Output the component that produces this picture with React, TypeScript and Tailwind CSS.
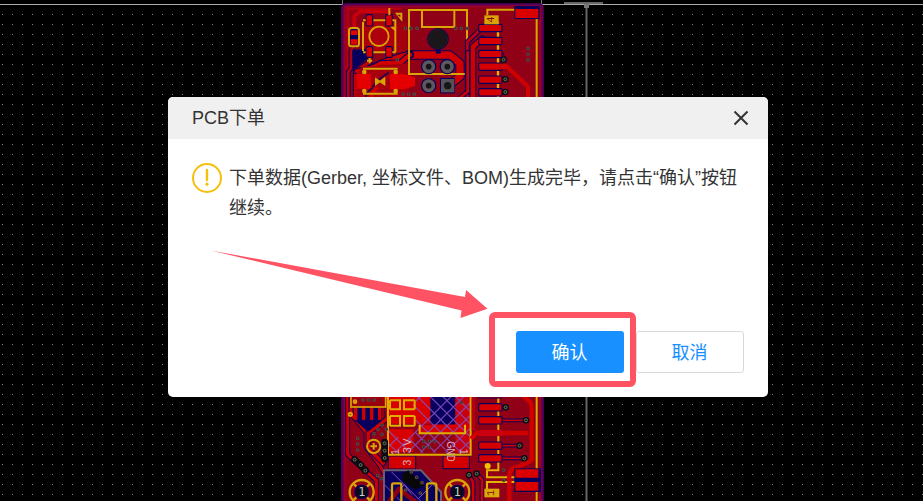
import React from "react";

const NAVY = "#08005c";
const RED = "#d00000";
const COPPER = "#900016";
const GOLD = "#d8a406";

type TraceProps = { d: string; w?: number; color?: string; edge?: number };

function Trace({ d, w = 10, color = RED, edge = 3 }: TraceProps) {
  return (
    <g fill="none" strokeLinejoin="round" strokeLinecap="round">
      <path d={d} stroke={NAVY} strokeWidth={w + edge * 2} />
      <path d={d} stroke={color} strokeWidth={w} />
    </g>
  );
}

function Pad({ x, y, w, h }: { x: number; y: number; w: number; h: number }) {
  return <rect x={x} y={y} width={w} height={h} rx="4" fill="#d60000" stroke={NAVY} strokeWidth="3.5" />;
}

function Via({ x, y, r = 8 }: { x: number; y: number; r?: number }) {
  return (
    <g>
      <circle cx={x} cy={y} r={r + 2} fill="#0c0c10" />
      <circle cx={x} cy={y} r={r * 0.55} fill="#161616" stroke="#667064" strokeWidth="3" />
    </g>
  );
}

function Dots({ points }: { points: number[][] }) {
  return (
    <g fill="#222" stroke="#5c4a48" strokeWidth="3.2">
      {points.map(([x, y]) => (
        <circle key={`${x}-${y}`} cx={x} cy={y} r="4" />
      ))}
    </g>
  );
}

function BoardTop() {
  return (
    <g transform="translate(335 0) scale(0.33333)">
      <path d="M22 320V24Q22 13 34 13H612Q623 13 623 24V320Z" fill={COPPER} stroke="#56005f" strokeWidth="7" />
      <path d="M29 320V27Q29 20 37 20H606Q615 20 615 28V320" fill="none" stroke="#98002e" strokeWidth="5" />
      <path d="M38 300V32Q38 26 46 26H200" fill="none" stroke="#b40010" strokeWidth="7" />
      <path d="M180 70H215V160L180 172Z" fill="#a4000e" />
      <rect x="86" y="62" width="94" height="95" fill="#ae000c" />
      <path d="M58 84V48L76 34H162V48" fill="none" stroke="#cc000c" strokeWidth="11" strokeLinejoin="round" />
      <Trace d="M57 126V140L48 150V205L40 215V300" w={8} color="#b80010" />
      <path d="M52 150L92 147L100 174L70 198L54 210Z" fill={NAVY} />
      <Trace d="M105 165V185L62 214V290" w={11} color="#bb0008" />
      <Trace d="M165 173H198L215 165" w={8} color="#9e0010" />
      <Trace d="M215 243H186" w={26} />
      <Trace d="M220 165H345L375 190V230L344 254" w={22} />
      <Trace d="M110 205Q170 175 225 164" w={18} />
      <Trace d="M66 214Q125 202 136 190L198 187Q214 172 225 164" w={13} />
      <path d="M80 200L190 192H222V296H64V222Z" fill="#a6000e" />
      <path d="M128 262Q108 278 106 300" fill="none" stroke={RED} strokeWidth="10" />
      <path d="M64 222H108V266H66ZM165 222H206L240 232V258L206 268H165Z" fill="#e40000" />
      <path d="M112 264Q92 277 90 300M161 218Q128 238 112 262" fill="none" stroke={NAVY} strokeWidth="4" />
      <Pad x={93} y={44} w={20} h={34} />
      <Pad x={152} y={44} w={20} h={34} />
      <Pad x={93} y={140} w={20} h={32} />
      <Pad x={152} y={140} w={20} h={32} />
      <g fill="none" stroke={GOLD} strokeWidth="6">
        <path d="M115 61H151M84 66V153M84 61H92M172 61H181V157M84 157H92M115 157H151M172 157H181M163 24V45" />
        <circle cx="132" cy="109" r="29" strokeWidth="5.5" />
        <path d="M104 174V190M96 182H112M84 206H188M84 281H188" />
      </g>
      <path d="M180 38H202V66Z" fill={GOLD} />
      <path d="M187 44H196V52Z" fill={COPPER} />
      <path d="M165 80H181V94Z" fill={GOLD} />
      <rect x="42" y="84" width="30" height="55" rx="8" fill={NAVY} stroke={GOLD} strokeWidth="6" />
      <path d="M47 91H68V105H47ZM47 118H68V134H47Z" fill="#dc0500" />
      <g fill={GOLD}>
        <circle cx="88" cy="216" r="7" /><circle cx="182" cy="216" r="7" />
        <circle cx="88" cy="273" r="7" /><circle cx="182" cy="273" r="7" />
      </g>
      <path d="M122 236L149 254V234L122 254Z" fill="#d7a500" stroke={GOLD} strokeWidth="4" />
      <path d="M222 30H396V222H222Z" fill="none" stroke={GOLD} strokeWidth="6" />
      <path d="M261 30V81H358V30" fill="none" stroke={GOLD} strokeWidth="6" />
      <path d="M310 140V161" stroke={NAVY} strokeWidth="15" />
      <circle cx="309" cy="117" r="31" fill="#111116" stroke={NAVY} strokeWidth="3" />
      <circle cx="309" cy="117" r="29" fill="#191719" stroke="#292429" strokeWidth="2" />
      {[[281, 200], [337, 200], [281, 257]].map(([x, y]) => (
        <g key={`${x}-${y}`}>
          <circle cx={x} cy={y} r="23" fill={NAVY} />
          <circle cx={x} cy={y} r="14" fill="#151416" stroke="#5c585c" strokeWidth="11" />
        </g>
      ))}
      <rect x="315" y="234" width="45" height="46" fill={NAVY} />
      <rect x="318" y="237" width="40" height="40" fill="#555257" />
      <circle cx="338" cy="257" r="11" fill="#171619" />
      <Dots points={[[211, 85], [228, 85], [246, 85], [362, 85], [379, 85], [397, 85], [187, 179], [204, 282], [221, 282], [238, 282], [579, 145], [579, 162], [579, 179]]} />
      <Trace d="M438 86L397 126V290" w={9} color="#b80010" />
      <Trace d="M442 116L414 140V290" w={14} />
      <Trace d="M398 157V275L372 295" w={8} />
      <path d="M489 66V300" stroke="#e0b500" strokeWidth="7" />
      <path d="M490 200H516L579 260V298" fill="none" stroke={RED} strokeWidth="12" strokeLinejoin="round" />
      <Trace d="M500 161L507 178M500 238H509M500 276H509" w={5} />
      {[73, 112, 151, 189, 228, 266].map((y) => <Pad key={y} x={431} y={y} w={70} h={22} />)}
      <path d="M490 192H516V207H490Z" fill={RED} />
      <Via x={506} y={179} /><Via x={511} y={238} /><Via x={511} y={276} />
      <path d="M457 46V29H540M605 55V300" fill="none" stroke={GOLD} strokeWidth="6" />
      <path d="M448 46H491V73H448Z" fill={GOLD} />
      <text x="469" y="59" textAnchor="middle" dominantBaseline="central" transform="rotate(-90 469 59)" fontFamily="Liberation Mono, monospace" fontSize="31" fill={COPPER}>4</text>
      <rect x="538" y="18" width="76" height="39" fill={NAVY} />
      <path d="M541 27H610V54H541Z" fill="#db0000" />
    </g>
  );
}

function BoardBottom() {
  return (
    <g transform="translate(335 392) scale(0.33333)">
      <path d="M22 0H623V340H22Z" fill={COPPER} stroke="#56005f" strokeWidth="7" />
      <path d="M30 0V340M615 0V340" stroke="#98002e" strokeWidth="5" />
      <Trace d="M38 0V188L67 215L124 265V340" w={9} />
      <Trace d="M48 0V66L93 120V165L134 220L146 242" w={9} />
      <Trace d="M157 0V80L100 122V170L145 214" w={11} />
      <path d="M56 42H140V86L99 119L58 84Z" fill={NAVY} />
      <path d="M62 48V80M86 48V80M110 48V80M134 48V80" stroke={RED} strokeWidth="10" strokeLinecap="round" />
      <rect x="48" y="0" width="104" height="45" fill="#98000e" stroke={GOLD} strokeWidth="5" />
      <path d="M160 0H290V95H160Z" fill="#da0000" />
      <path d="M286 0H361V97H286Z" fill={NAVY} />
      <path d="M361 0H405V182H361Z" fill="#c80010" />
      <path d="M162 112H235V180H162ZM250 98H400V124H250Z" fill="#d80000" />
      <path d="M160 192H242V231H160ZM324 192H403V230H324Z" fill="#d40000" stroke={NAVY} strokeWidth="3" />
      <g fill="none" stroke="#8350c5" strokeWidth="3.5" opacity=".85">
        <path d="M240 30L270 0M161 164L190 135M180 182L362 0M218 182L400 0M256 182L405 33M294 182L405 71M332 182L405 109M370 182L405 147M161 155L188 182M161 117L226 182M220 138L264 182M240 120L302 182M240 82L340 182M234 38L378 182M234 0L405 171M272 0L405 133M310 0L405 95M348 0L405 57" />
      </g>
      <g fill="none" stroke="#ddb000" strokeWidth="6">
        <path d="M159 0V188H407V0M165 25H195V52H165M239 25H207V52H239M165 72H195V101H165M239 72H207V101H239" />
        <path d="M165 52V25M165 101V72M239 52V25M239 101V72" />
        <path d="M254 98V124H390V98" />
      </g>
      <Dots points={[[84, 24], [101, 24], [118, 24], [68, 139], [68, 156], [68, 174], [141, 99], [129, 112], [154, 112], [117, 125], [141, 127], [128, 251], [139, 260], [266, 148], [283, 148], [299, 148], [266, 165], [283, 165]]} />
      <g fill="none" stroke={GOLD} strokeWidth="6">
        <circle cx="60" cy="29" r="4" /><circle cx="46" cy="67" r="5" />
        <circle cx="116" cy="163" r="20" /><path d="M116 153V173M106 163H126" />
      </g>
      <path d="M149 150V201M59 203L92 236" stroke="#100c10" strokeWidth="20" strokeLinecap="round" />
      <Via x={149} y={154} /><Via x={149} y={176} /><Via x={149} y={198} />
      <Via x={59} y={203} /><Via x={77} y={219} /><Via x={91} y={236} />
      <g fontFamily="Liberation Sans, sans-serif" fill="#d8b4b8">
        <text transform="translate(229 221) rotate(-90)" textLength="82" fontSize="33" xmlSpace="preserve">3 3V</text>
        <text transform="translate(191 189) rotate(-90)" fontSize="32">1</text>
        <text transform="translate(337 148) rotate(90)" textLength="61" lengthAdjust="spacingAndGlyphs" fontSize="33">GND</text>
        <text transform="translate(376 170) rotate(90)" fontSize="32">1</text>
      </g>
      <path d="M147 235H258L318 300V340H147Z" fill={NAVY} stroke="#686071" strokeWidth="6" />
      <path d="M202 245L220 235L268 280L238 293L202 265Z" fill="#080808" />
      <path d="M165 325L208 278L254 340M150 280L200 330M170 240L270 340M230 340L290 280" fill="none" stroke="#8250c5" strokeWidth="3" />
      <Trace d="M154 340L192 291L255 340" w={14} color="#8c0016" />
      <Dots points={[[229, 240], [245, 256], [261, 272], [212, 294], [256, 303]]} />
      <g fill="none" stroke={GOLD} strokeWidth="7">
        <path d="M171 340V280Q171 274 176 274H194Q199 274 199 280V340M276 340V280Q276 274 281 274H299Q304 274 304 280V340" />
        {[80, 367].map((x) => (
          <g key={x}>
            <circle cx={x} cy="300" r="36" />
            <path d={`M${x - 25} 275L${x - 16} 284M${x + 25} 275L${x + 16} 284M${x - 25} 325L${x - 16} 316M${x + 25} 325L${x + 16} 316`} />
            <circle cx={x} cy="300" r="20" fill="#090b14" stroke={NAVY} strokeWidth="4" />
          </g>
        ))}
      </g>
      {[80, 367].map((x) => <text key={x} x={x} y="312" textAnchor="middle" fontFamily="DejaVu Sans Mono, monospace" fontSize="35" fill="#c9ced2">1</text>)}
      <path d="M415 0V115" stroke="#b40010" strokeWidth="10" />
      <path d="M490 0V235H456V256H540M456 300V270H540" fill="none" stroke="#e0b500" strokeWidth="6" />
      <Trace d="M402 250L414 270V340M427 247L441 263V340" w={8} />
      <path d="M408 140L425 123H580M552 0L582 28Q590 34 590 50V205L548 225Q520 227 523 260V340" fill="none" stroke={RED} strokeWidth="13" />
      <Trace d="M500 46H511M500 85H570M500 161H552M500 199H567" w={5} />
      {[-4, 35, 74, 150, 188].map((y) => <Pad key={y} x={431} y={y} w={70} h={22} />)}
      <path d="M433 114H501V132H433Z" fill="#cc0010" />
      <Via x={512} y={46} /><Via x={573} y={85} /><Via x={554} y={161} /><Via x={568} y={199} />
      <Via x={402} y={249} /><Via x={425} y={245} />
      <Dots points={[[506, 234], [506, 265], [379, 31]]} />
      <path d="M605 0V340" stroke="#ddb000" strokeWidth="6" />
      <path d="M538 229H618V300H538Z" fill={NAVY} />
      <path d="M541 232H610V257H541ZM541 270H610V296H541Z" fill="#db0000" />
      <circle cx="458" cy="222" r="9" fill="#edc400" />
      <path d="M448 290H493V316H448Z" fill="#d9ab08" />
      <text x="471" y="303" textAnchor="middle" dominantBaseline="central" transform="rotate(-90 471 303)" fontFamily="Liberation Mono, monospace" fontSize="30" fill={COPPER}>1</text>
    </g>
  );
}

function PcbCanvas() {
  return (
    <svg className="absolute inset-0 h-full w-full" viewBox="0 0 923 501" aria-hidden="true">
      <defs>
        <pattern id="grid" x="2" y="4" width="10" height="10" patternUnits="userSpaceOnUse">
          <rect width="1" height="1" fill="#858585" />
        </pattern>
      </defs>
      <rect width="923" height="501" fill="#000" />
      <rect y="4" width="923" height="1" fill="#aaa" />
      <path d="M342.5 0V7M541.5 0V5" stroke="#777" />
      <rect y="5" width="923" height="496" fill="url(#grid)" />
      <path d="M564 3H603M586.5 3V501" fill="none" stroke="#666" strokeWidth="2" />
      <path d="M584 4H589V8H584Z" fill="#777" />
      <BoardTop />
      <BoardBottom />
    </svg>
  );
}

export default function App() {
  return (
    <main className="relative flex h-[501px] w-[923px] items-start overflow-hidden bg-black pt-[97px] pl-[168px] font-['Liberation_Sans','Noto_Sans_CJK_SC',sans-serif] text-lg text-[#333]">
      <PcbCanvas />
      <section className="relative flex h-[300px] w-[600px] flex-col overflow-hidden rounded-[5px] bg-white" role="dialog">
        <header className="flex h-[42px] shrink-0 items-center justify-between bg-[#f0f0f0] pr-[19px] pl-6">
          <h1 className="text-lg leading-[42px]">PCB下单</h1>
          <button aria-label="关闭" className="flex h-4 w-4 items-center justify-center">
            <svg className="h-4 w-4" viewBox="0 0 16 16"><path d="M1.5 1.5L14.5 14.5M14.5 1.5L1.5 14.5" stroke="#333" strokeWidth="2" /></svg>
          </button>
        </header>
        <div className="flex flex-1 gap-[7px] px-6 pt-6">
          <svg className="h-[30px] w-[30px] shrink-0" viewBox="0 0 30 30" fill="none">
            <circle cx="15" cy="15" r="14" stroke="#f5bf0b" strokeWidth="2" />
            <path d="M15 7V17" stroke="#f5bf0b" strokeWidth="2.4" strokeLinecap="round" />
            <circle cx="15" cy="21.2" r="1.6" fill="#f5bf0b" />
          </svg>
          <p className="leading-[30px] whitespace-nowrap">下单数据(Gerber, 坐标文件、BOM)生成完毕，请点击“确认”按钮<br />继续。</p>
        </div>
        <footer className="flex justify-end gap-3 px-6 pb-6">
          <button className="h-[42px] w-[108px] rounded-[3px] bg-[#1890ff] pt-0.5 pr-px text-white">确认</button>
          <button className="h-[42px] w-[108px] rounded-[3px] border border-[#d9d9d9] bg-white pt-0.5 pr-px text-[#1890ff]">取消</button>
        </footer>
      </section>
      <svg className="pointer-events-none absolute inset-0 h-full w-full" viewBox="0 0 923 501" aria-hidden="true">
        <path d="M211 250.5L465 297L466 290L487.5 308.8L460.5 318L461.5 310.5Z" fill="#ff5263" />
        <rect x="492" y="315" width="141" height="69" rx="3" fill="none" stroke="#ff5263" strokeWidth="6" />
      </svg>
    </main>
  );
}
